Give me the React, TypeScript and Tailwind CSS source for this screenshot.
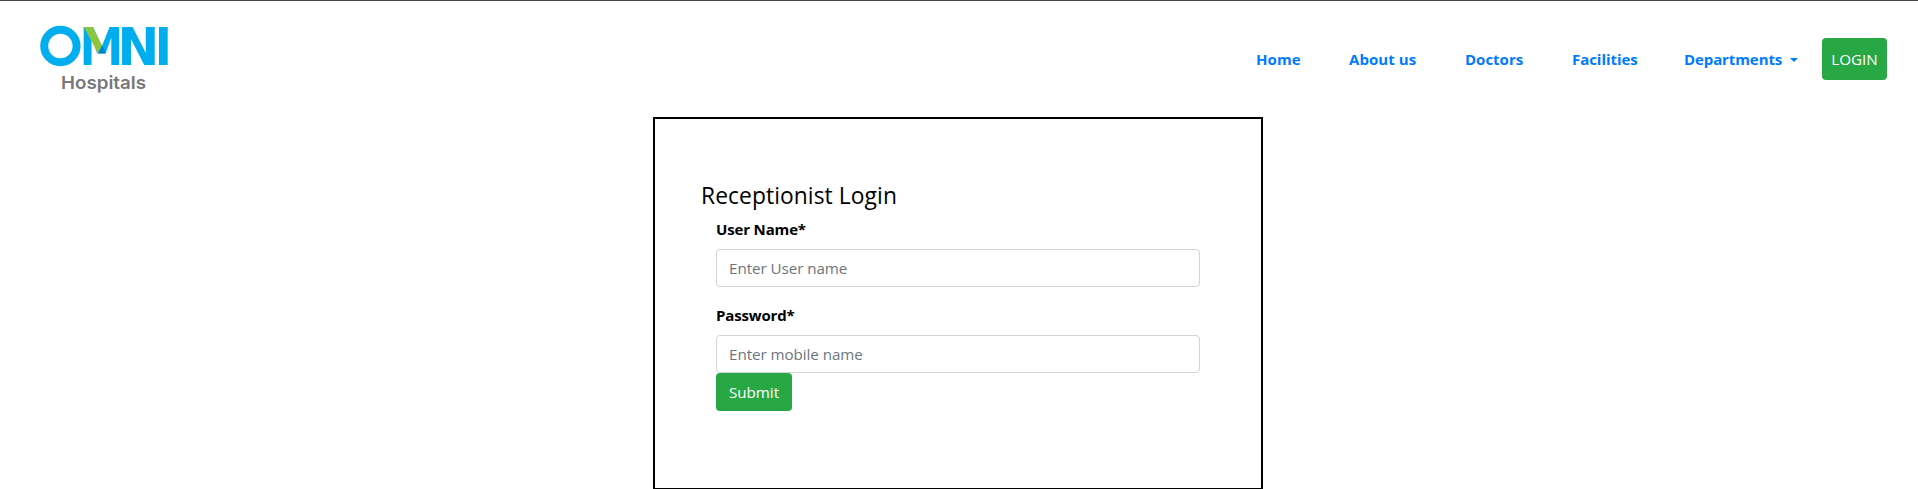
const links = [
  { label: "Home", width: "w-[93px]", tracking: "tracking-[0.1px]" },
  { label: "About us", width: "w-[116px]", tracking: "tracking-[0.08px]" },
  { label: "Doctors", width: "w-[107px]", tracking: "tracking-normal" },
  { label: "Facilities", width: "w-[112px]", tracking: "tracking-[-0.05px]" },
];

function Logo() {
  return (
    <svg className="h-[92px] w-[180px] shrink-0" viewBox="20 1 180 92" role="img" aria-label="OMNI Hospitals">
      <circle cx="60.4" cy="46" r="16.2" fill="none" stroke="#00aeef" strokeWidth="8" />
      <g fill="#00aeef" fontFamily="DejaVu Sans, sans-serif" fontWeight="700" fontSize="52">
        <text transform="translate(79.6 65) scale(.84 1)">M</text>
        <text transform="translate(117.5 65) scale(.96 1)">N</text>
        <text transform="translate(154.7 65) scale(.89 1)">I</text>
      </g>
      <path d="M92.5 26H110L102 45.5Z" fill="#fff" />
      <path d="M92.3 53.4H110.7V59H92.3Z" fill="#fff" />
      <path d="M84 27.1H92.6L102.2 45.8L98 53.4Z" fill="#8cc63f" />
      <path d="M102.2 45L106 53.4H98Z" fill="#0083ca" />
      <text
        x="61"
        y="89"
        fill="#77787b"
        fontFamily="Inter, sans-serif"
        fontWeight="600"
        fontSize="17.8"
        textLength="85"
        lengthAdjust="spacingAndGlyphs"
      >
        Hospitals
      </text>
    </svg>
  );
}

function Field({ label, placeholder, type }: { label: string; placeholder: string; type: string }) {
  return (
    <label className="block">
      <span className="block h-6 text-[15px] font-bold leading-6 tracking-[-0.15px]">{label}</span>
      <input
        type={type}
        placeholder={placeholder}
        className="mt-2 block h-[38px] w-full rounded border border-[#ced4da] bg-white px-3 text-[15.2px] tracking-[-0.06px] placeholder:text-[#6c757d]"
      />
    </label>
  );
}

export default function App() {
  return (
    <div className="h-[489px] overflow-hidden bg-white font-['Open_Sans',sans-serif] text-[15.2px] text-black">
      <header className="flex h-[117px] border-t border-[#444] pl-5">
        <Logo />
        <nav className="ml-auto flex h-[116px] items-center pr-[31px] font-bold text-[#007bff]">
          {links.map((l) => (
            <a key={l.label} href="#" className={`${l.width} ${l.tracking} whitespace-nowrap text-[15px]`}>
              {l.label}
            </a>
          ))}
          <a href="#" className="flex w-[138px] items-center whitespace-nowrap text-[15px] tracking-[-0.1px]">
            Departments
            <span className="ml-2 mt-px border-x-[4.5px] border-t-[4.5px] border-x-transparent border-t-[#007bff]" />
          </a>
          <button className="h-[42px] w-[65px] rounded bg-[#28a745] text-[15.2px] font-normal text-white">LOGIN</button>
        </nav>
      </header>
      <main className="ml-[653px] h-[373px] w-[610px] border-2 border-black px-[46px] pt-[62px]">
        <h1 className="h-9 text-[22.8px] leading-[30px] tracking-[0.08px]">Receptionist Login</h1>
        <form className="w-[499px] pl-[15px]">
          <Field label="User Name*" placeholder="Enter User name" type="text" />
          <div className="h-4" />
          <Field label="Password*" placeholder="Enter mobile name" type="password" />
          <button type="button" className="block h-[38px] w-[76px] rounded bg-[#28a745] text-white">
            Submit
          </button>
        </form>
      </main>
    </div>
  );
}
